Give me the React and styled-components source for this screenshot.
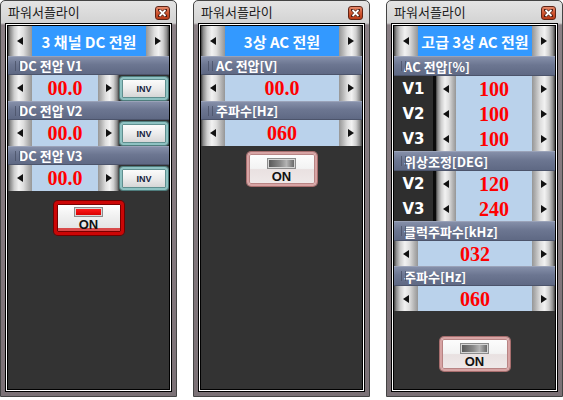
import React from "react";
import styled, { createGlobalStyle, css } from "styled-components";

const GlobalStyle = createGlobalStyle`
  html, body { margin: 0; padding: 0; background: #fff; }
  * { box-sizing: border-box; }
`;

const KR = `"Noto Sans CJK KR", "Liberation Sans", sans-serif`;

const Desktop = styled.div`
  width: 563px;
  height: 400px;
  display: flex;
  justify-content: space-between;
  background: #fff;
`;

const Window = styled.div`
  width: 177px;
  height: 397px;
  display: flex;
  flex-direction: column;
  border: 1px solid #444;
  border-radius: 5px 5px 0 0;
  padding: 0 4px 4px;
  background: linear-gradient(
    to bottom,
    #e4e4e4 0px,
    #d3d3d3 22px,
    #8a8085 24px,
    #7b7176 100%
  );
`;

const TitleBar = styled.div`
  height: 22px;
  display: flex;
  align-items: flex-start;
  justify-content: space-between;
  padding: 0 2px 0 3px;
`;

const Title = styled.span`
  margin-top: 3px;
  font-family: ${KR};
  font-size: 13px;
  line-height: 15px;
  color: #1c1c1c;
`;

const CloseBtn = styled.div`
  margin-top: 5px;
  width: 15px;
  height: 14px;
  border: 1px solid #5e2416;
  border-radius: 3px;
  display: flex;
  align-items: center;
  justify-content: center;
  background: linear-gradient(to bottom, #e58a6c 0%, #cf5530 50%, #b83a18 100%);
`;

const Body = styled.div`
  flex: 1;
  display: flex;
  flex-direction: column;
  border: 1px solid #000;
  padding: 2px;
  background: #333;
  box-shadow: inset 0 0 0 1px #fff, inset 0 0 0 2px #000;
`;

const Row = styled.div`
  display: flex;
  height: ${(p) => p.$h}px;
`;

const ArrowBtn = styled.div`
  width: ${(p) => p.$w}px;
  flex: none;
  display: flex;
  align-items: center;
  justify-content: center;
  background: linear-gradient(
    ${(p) => (p.$flip ? "to left" : "to right")},
    #3e3e3e 0%,
    #8a8a8a 9%,
    #cecece 26%,
    #f2f2f2 45%,
    #dedede 64%,
    #b4b4b4 84%,
    #969696 100%
  );
`;

const Heading = styled.div`
  flex: 1;
  display: flex;
  align-items: center;
  justify-content: center;
  background: #3399ff;
  color: #fff;
  font-family: ${KR};
  font-weight: 700;
  font-size: 15px;
`;

const Label = styled.div`
  height: ${(p) => p.$h}px;
  display: flex;
  align-items: center;
  padding-left: ${(p) => p.$pad}px;
  position: relative;
  background: linear-gradient(to bottom, #858fa9 0%, #6c7691 45%, #5f6984 100%);
  border-top: 1px solid #9aa2b8;
  border-bottom: 1px solid #4c546b;
  color: #fff;
  font-family: ${KR};
  font-weight: 700;
  font-size: 13px;
  line-height: 1;

  &::before {
    content: "";
    position: absolute;
    left: 7px;
    top: 4px;
    width: 3px;
    height: 10px;
    border-left: 1px solid #4a5268;
    border-right: 1px solid #4a5268;
    opacity: 0.8;
  }
`;

const Value = styled.div`
  flex: 1;
  display: flex;
  align-items: center;
  justify-content: center;
  background: #bad2eb;
  color: #f00;
  font-family: "Liberation Serif", serif;
  font-weight: 700;
  font-size: 20px;
  line-height: 1;
`;

const NameCell = styled.div`
  width: 42px;
  flex: none;
  display: flex;
  align-items: center;
  justify-content: center;
  background: #2e2e2e;
  border-right: 3px solid #0c0c0c;
  color: #fff;
  font-family: "DejaVu Sans", sans-serif;
  font-weight: 700;
  font-size: 15px;
`;

const InvCell = styled.div`
  width: 50px;
  flex: none;
  padding: 2px 1px 1px 1px;
  display: flex;
  background: #333;
`;

const InvBtn = styled.div`
  flex: 1;
  display: flex;
  align-items: center;
  justify-content: center;
  border: 2px solid #8ec2c2;
  border-radius: 3px;
  box-shadow: 0 0 0 1px #4f7d7d, inset 0 0 0 1px #5f8f8f;
  background: linear-gradient(to bottom, #fdfdfd 0%, #ececec 50%, #d4d4d4 100%);
  color: #16223e;
  font-family: "Liberation Sans", sans-serif;
  font-weight: 700;
  font-size: 9px;
`;

const ButtonArea = styled.div`
  display: flex;
  justify-content: center;
  padding-top: ${(p) => p.$top}px;
`;

const PowerBtn = styled.div`
  width: 70px;
  height: 34px;
  display: flex;
  flex-direction: column;
  align-items: center;
  padding-top: 4px;
  gap: 1px;
  border-radius: 4px;
  font-family: "Liberation Sans", sans-serif;
  font-weight: 700;
  font-size: 13px;
  color: #111;
  ${(p) =>
    p.$on
      ? css`
          border: 3px solid #cc0606;
          box-shadow: 0 0 0 1px #6e0000, inset 0 0 0 1px #7a0000,
            inset 0 -3px 0 1px #d84a4a;
          background: linear-gradient(to bottom, #ffffff 0%, #f0f0f0 45%, #e0e0e0 100%);
        `
      : css`
          border: 2px solid #d7a4a4;
          box-shadow: 0 0 0 1px #a86e6e, inset 0 0 0 1px #b88484;
          background: linear-gradient(
            to bottom,
            #fdfdfd 0%,
            #f3f3f3 48%,
            #e9e1e1 52%,
            #efe9e9 100%
          );
          padding-top: 5px;
        `}
`;

const Lamp = styled.div`
  width: 27px;
  height: 10px;
  border: 1px solid #d6d6d6;
  box-shadow: 0 0 0 1px #8c8c8c;
  background: ${(p) =>
    p.$on
      ? "linear-gradient(to bottom, #ff1a1a, #d80000)"
      : "linear-gradient(to right, #5a5a5a 0%, #8a8a8a 45%, #b4b4b4 70%, #6a6a6a 100%)"};
`;

const Spacer = styled.div`
  flex: 1;
`;

function Arrow({ dir }) {
  return (
    <svg width="6" height="8" viewBox="0 0 6 8">
      {dir === "left" ? (
        <polygon points="0,4 6,0 6,8" fill="#111" />
      ) : (
        <polygon points="6,4 0,0 0,8" fill="#111" />
      )}
    </svg>
  );
}

function CloseIcon() {
  return (
    <svg width="9" height="8" viewBox="0 0 9 8">
      <path d="M1.5 1 L7.5 7 M7.5 1 L1.5 7" stroke="#4a1a10" strokeWidth="3.2" strokeLinecap="square" />
      <path d="M1.5 1 L7.5 7 M7.5 1 L1.5 7" stroke="#fff" strokeWidth="1.8" />
    </svg>
  );
}

function Stepper({ row, h }) {
  return (
    <Row $h={h}>
      {row.name && <NameCell>{row.name}</NameCell>}
      <ArrowBtn $w={row.name ? 20 : 24}>
        <Arrow dir="left" />
      </ArrowBtn>
      <Value>{row.value}</Value>
      <ArrowBtn $w={row.inv ? 21 : 23} $flip>
        <Arrow dir="right" />
      </ArrowBtn>
      {row.inv && (
        <InvCell>
          <InvBtn>INV</InvBtn>
        </InvCell>
      )}
    </Row>
  );
}

function PanelWindow({ panel }) {
  return (
    <Window>
      <TitleBar>
        <Title>파워서플라이</Title>
        <CloseBtn>
          <CloseIcon />
        </CloseBtn>
      </TitleBar>
      <Body>
        <Row $h={30}>
          <ArrowBtn $w={24}>
            <Arrow dir="left" />
          </ArrowBtn>
          <Heading>{panel.heading}</Heading>
          <ArrowBtn $w={23} $flip>
            <Arrow dir="right" />
          </ArrowBtn>
        </Row>
        {panel.sections.map((s) => (
          <React.Fragment key={s.label}>
            <Label $h={panel.labelH} $pad={panel.labelPad}>
              {s.label}
            </Label>
            {s.rows.map((r, i) => (
              <Stepper key={i} row={r} h={panel.rowH} />
            ))}
          </React.Fragment>
        ))}
        <ButtonArea $top={panel.btnTop}>
          <PowerBtn $on={panel.on}>
            <Lamp $on={panel.on} />
            ON
          </PowerBtn>
        </ButtonArea>
        <Spacer />
      </Body>
    </Window>
  );
}

const panels = [
  {
    heading: "3 채널 DC 전원",
    labelH: 19,
    rowH: 26,
    labelPad: 11,
    btnTop: 10,
    on: true,
    sections: [
      { label: "DC 전압 V1", rows: [{ value: "00.0", inv: true }] },
      { label: "DC 전압 V2", rows: [{ value: "00.0", inv: true }] },
      { label: "DC 전압 V3", rows: [{ value: "00.0", inv: true }] },
    ],
  },
  {
    heading: "3상 AC 전원",
    labelH: 19,
    rowH: 26,
    labelPad: 15,
    btnTop: 6,
    on: false,
    sections: [
      { label: "AC 전압[V]", rows: [{ value: "00.0" }] },
      { label: "주파수[Hz]", rows: [{ value: "060" }] },
    ],
  },
  {
    heading: "고급 3상 AC 전원",
    labelH: 20,
    rowH: 25,
    labelPad: 10,
    btnTop: 26,
    on: false,
    sections: [
      {
        label: "AC 전압[%]",
        rows: [
          { name: "V1", value: "100" },
          { name: "V2", value: "100" },
          { name: "V3", value: "100" },
        ],
      },
      {
        label: "위상조정[DEG]",
        rows: [
          { name: "V2", value: "120" },
          { name: "V3", value: "240" },
        ],
      },
      { label: "클럭주파수[kHz]", rows: [{ value: "032" }] },
      { label: "주파수[Hz]", rows: [{ value: "060" }] },
    ],
  },
];

export default function App() {
  return (
    <>
      <GlobalStyle />
      <Desktop>
        {panels.map((p) => (
          <PanelWindow key={p.heading} panel={p} />
        ))}
      </Desktop>
    </>
  );
}
